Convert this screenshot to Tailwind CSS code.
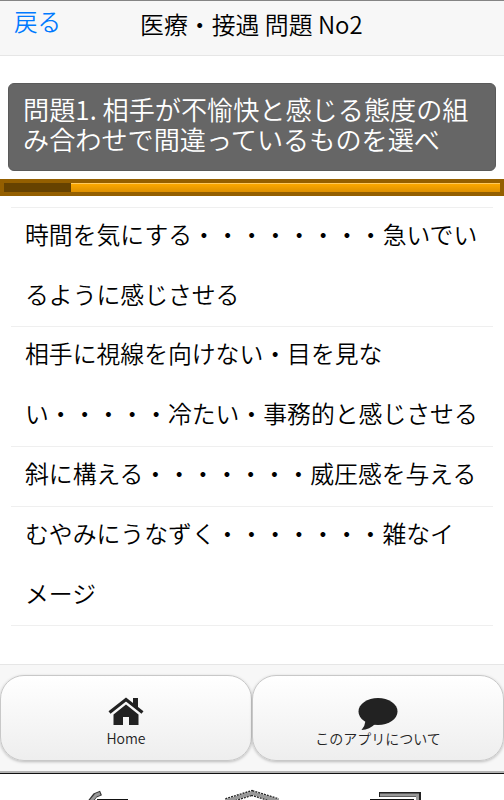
<!DOCTYPE html>
<html lang="ja">
<head>
<meta charset="utf-8">
<title>医療・接遇 問題 No2</title>
<script src="https://cdn.jsdelivr.net/npm/@tailwindcss/browser@4"></script>
</head>
<body class="h-[800px] w-[504px] overflow-hidden bg-white font-['Noto_Sans_CJK_JP',sans-serif] font-[350] text-black">
<div class="flex h-[800px] flex-col">
  <header class="grid h-[56px] shrink-0 grid-cols-[140px_1fr] border-t border-b border-t-[#858585] border-b-[#e6e6e6] bg-[#f7f7f7]">
    <a class="pl-[14px] text-[23.6px] leading-[40px] whitespace-nowrap text-[#007aff]">戻る</a>
    <h1 class="text-[23.9px] leading-[45px] font-[350] whitespace-nowrap">医療・接遇 問題 No2</h1>
  </header>
  <section class="mx-[8px] mt-[27px] h-[88px] shrink-0 rounded-[6px] border border-[#5a5a5a] bg-[#666] pt-[10px] pl-[14px] text-[26.15px] leading-[30px] whitespace-nowrap text-white">
    問題1. 相手が不愉快と感じる態度の組<br>み合わせで間違っているものを選べ
  </section>
  <div class="mt-[8px] flex h-[17px] shrink-0 border-4 border-[#945f00] bg-linear-to-b from-[#ffab00] to-[#de9000]">
    <div class="w-[67px] bg-[#664200]"></div>
    <div class="flex-1 border-t border-[#ffc95c]"></div>
  </div>
  <ul class="mx-[11px] mt-[11px] h-[457px] shrink-0 text-[23.84px] leading-[59.6px] whitespace-nowrap">
    <li class="h-[119.4px] border-t border-[#efefef] pl-[14px]"><p class="-mt-[4px]">時間を気にする・・・・・・・・急いでい<br>るように感じさせる</p></li>
    <li class="h-[119.6px] border-t border-[#efefef] pl-[14px]"><p class="-mt-[4px]">相手に視線を向けない・目を見な<br>い・・・・・冷たい・事務的と感じさせる</p></li>
    <li class="h-[60px] border-t border-[#efefef] pl-[14px]"><p class="-mt-[4px]">斜に構える・・・・・・・威圧感を与える</p></li>
    <li class="h-[119.8px] border-t border-b border-[#efefef] pl-[14px]"><p class="-mt-[4px]">むやみにうなずく・・・・・・・雑なイ<br>メージ</p></li>
  </ul>
  <footer class="flex h-[107px] shrink-0 border-t border-[#e6e6e6] bg-[#f7f7f7] pt-[10px]">
    <button class="flex h-[86px] w-1/2 flex-col items-center rounded-[24px] border border-[#c8c8c8] bg-linear-to-b from-white to-[#eee] pt-[21px] text-[#222] shadow-[0_1px_3px_rgba(0,0,0,0.25)]">
      <svg class="h-[30px] w-[36px] shrink-0" viewBox="0 0 36 30" fill="none"><path d="M1.500 15.500 18 2.500 34.500 15.500" stroke="#222" stroke-width="3.200"/><path fill="#222" d="M25 1h5v11l-5-4z"/><path fill="#222" d="M18 7.500 30.500 17.500v10.500h-9.500v-8h-6v8H5.500v-10.500z"/></svg>
      <span class="text-[14px] leading-[22px] font-[350]">Home</span>
    </button>
    <button class="flex h-[86px] w-1/2 flex-col items-center rounded-[24px] border border-[#c8c8c8] bg-linear-to-b from-white to-[#eee] pt-[21px] text-[#222] shadow-[0_1px_3px_rgba(0,0,0,0.25)]">
      <svg class="h-[30px] w-[40px] shrink-0 overflow-visible" viewBox="0 0 40 30" fill="#222"><ellipse cx="20" cy="14.500" rx="19.500" ry="13.500"/><path d="M7.500 24Q7 29 3.500 33 12 32.500 17 27z"/></svg>
      <span class="text-[14px] leading-[22px] font-[350]">このアプリについて</span>
    </button>
  </footer>
  <nav class="h-[29px] shrink-0 overflow-hidden border-t-2 border-[#b4b4b4] bg-white">
    <div class="grid h-[27px] grid-cols-3 border-t border-[#111]">
      <svg class="h-[26px] w-[168px]" viewBox="0 0 168 26" fill="none"><path d="M90 28 95 21.500l6-2.500" stroke="#333" stroke-width="5"/><path d="M91 27 96 21l4-1.500" stroke="#999" stroke-width="3"/><path d="M97 26h31" stroke="#111" stroke-width="2"/></svg>
      <svg class="h-[26px] w-[168px]" viewBox="168 0 168 26" fill="none"><path d="M226 27 252 19l26 8" stroke="#222" stroke-width="6" stroke-dasharray="2 1"/><path d="M226 27 252 19l26 8" stroke="#999" stroke-width="3.500"/></svg>
      <svg class="h-[26px] w-[168px]" viewBox="336 0 168 26" fill="none"><path d="M379 20.500h39.500V27" stroke="#222" stroke-width="5"/><path d="M380 21h37.500v6" stroke="#999" stroke-width="3"/><path d="M370 26h44" stroke="#111" stroke-width="2"/></svg>
    </div>
  </nav>
</div>
</body>
</html>
